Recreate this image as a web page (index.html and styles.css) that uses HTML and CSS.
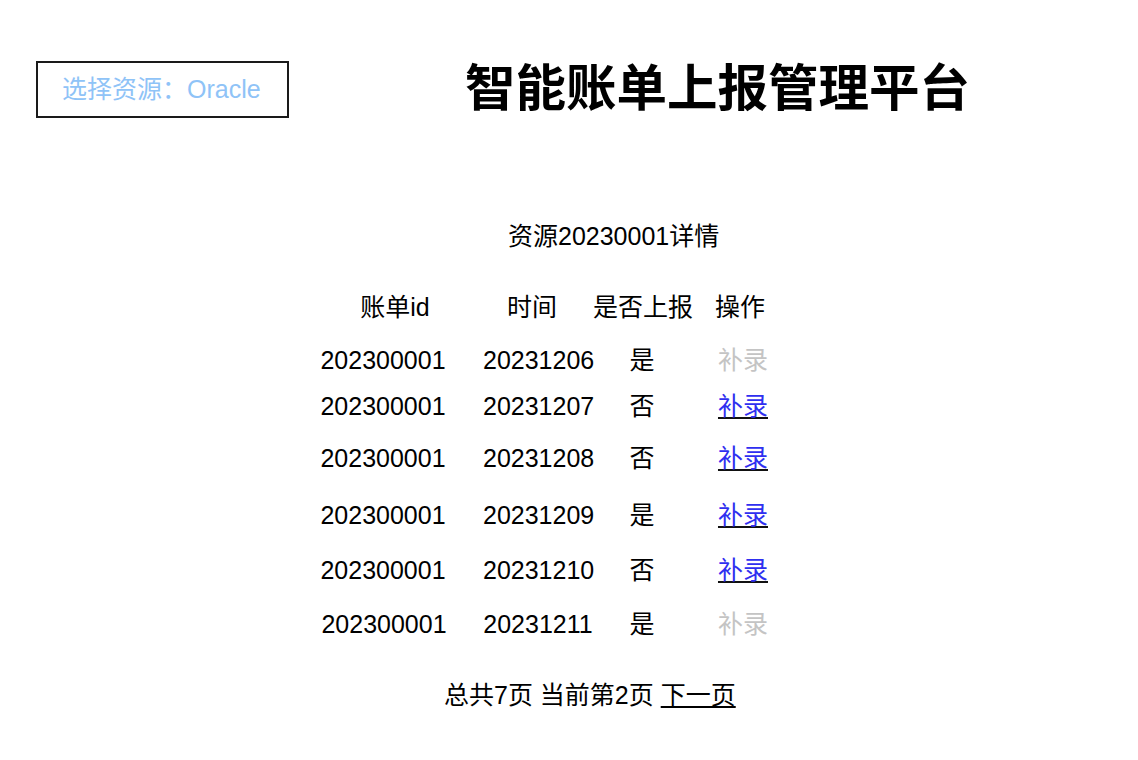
FILE: index.html
```html
<!DOCTYPE html>
<html lang="zh">
<head>
<meta charset="utf-8">
<title>智能账单上报管理平台</title>
<link rel="stylesheet" href="styles.css">
</head>
<body>
<header class="top">
  <div class="source-btn">选择资源：Oracle</div>
  <h1 class="title">智能账单上报管理平台</h1>
</header>
<main class="detail">
  <h2 class="subtitle">资源20230001详情</h2>
  <div class="bills">
    <div class="cell head h-id">账单id</div>
    <div class="cell head h-time">时间</div>
    <div class="cell head">是否上报</div>
    <div class="cell head h-op">操作</div>

    <div class="cell">202300001</div>
    <div class="cell">20231206</div>
    <div class="cell">是</div>
    <div class="cell"><span class="op disabled">补录</span></div>

    <div class="cell">202300001</div>
    <div class="cell">20231207</div>
    <div class="cell">否</div>
    <div class="cell"><a class="op" href="#">补录</a></div>

    <div class="cell">202300001</div>
    <div class="cell">20231208</div>
    <div class="cell">否</div>
    <div class="cell"><a class="op" href="#">补录</a></div>

    <div class="cell">202300001</div>
    <div class="cell">20231209</div>
    <div class="cell">是</div>
    <div class="cell"><a class="op" href="#">补录</a></div>

    <div class="cell">202300001</div>
    <div class="cell">20231210</div>
    <div class="cell">否</div>
    <div class="cell"><a class="op" href="#">补录</a></div>

    <div class="cell shift">202300001</div>
    <div class="cell">20231211</div>
    <div class="cell">是</div>
    <div class="cell"><span class="op disabled">补录</span></div>
  </div>
  <div class="pager">总共7页 当前第2页 <a class="next" href="#">下一页</a></div>
</main>
</body>
</html>
```

FILE: styles.css
```css
html, body {
  margin: 0;
  padding: 0;
  background: #fff;
}
body {
  font-family: "Liberation Sans", "Noto Sans CJK SC", sans-serif;
  color: #000;
  font-size: 25px;
}
.top {
  display: flex;
  align-items: center;
  padding: 59px 0 0 36px;
  height: 60px;
}
.source-btn {
  box-sizing: border-box;
  width: 253px;
  height: 57px;
  border: 2px solid #1a1a1a;
  display: flex;
  align-items: center;
  padding-left: 24px;
  color: #8fc3f7;
  font-size: 25px;
  line-height: 30px;
}
.title {
  margin: 0 0 0 176px;
  font-size: 50.5px;
  font-weight: bold;
  line-height: 60px;
}
.subtitle {
  margin: 102px 0 0 0;
  padding-left: 508px;
  font-size: 25px;
  font-weight: normal;
  line-height: 30px;
}
.bills {
  display: grid;
  grid-template-columns: 200px 110px 98px 104px;
  grid-template-rows: 53px 46px 52px 57px 55px 54px 30px;
  margin: 41px 0 0 283px;
  width: 512px;
}
.cell {
  text-align: center;
  line-height: 30px;
  white-space: nowrap;
}
.head.h-id { padding-left: 24px; }
.head.h-time { padding-right: 12px; }
.head.h-op { padding-right: 6px; }
.cell.shift { padding-left: 2px; }
.op {
  color: #2f2ff0;
  text-decoration: underline;
  text-decoration-color: #111;
}
.op.disabled {
  color: #c4c4c4;
  text-decoration: none;
}
.pager {
  margin-top: 41px;
  padding-left: 444px;
  line-height: 30px;
}
.next {
  color: #000;
  text-decoration: underline;
}
```
